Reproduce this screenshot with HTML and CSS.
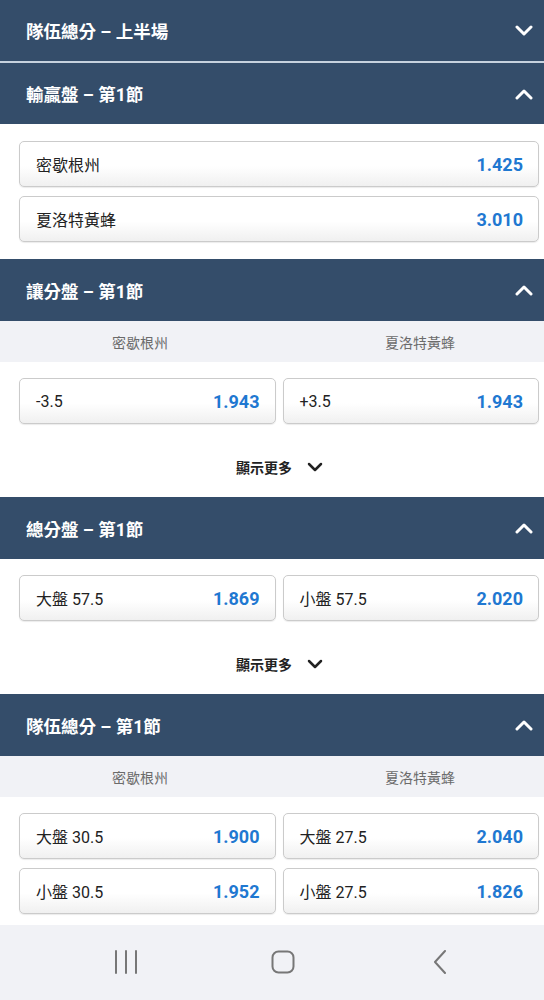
FILE: index.html
```html
<!DOCTYPE html>
<html lang="zh-Hant">
<head>
    <meta charset="UTF-8">
    <meta name="viewport" content="width=device-width, initial-scale=1.0">
    <title>投注市場</title>
    <link rel="stylesheet" href="styles.css">
</head>
<body>
    <div class="markets">
        <div class="market-head first">
            <span>隊伍總分 – 上半場</span>
            <svg class="chev" width="20" height="12" viewBox="0 0 20 12"><path d="M3 2 L10 9 L17 2" /></svg>
        </div>

        <div class="market-head">
            <span>輸贏盤 – 第1節</span>
            <svg class="chev" width="20" height="12" viewBox="0 0 20 12"><path d="M3 10 L10 3 L17 10" /></svg>
        </div>
        <div class="odds-list">
            <div class="odd-btn"><span class="label">密歇根州</span><span class="price">1.425</span></div>
            <div class="odd-btn"><span class="label">夏洛特黃蜂</span><span class="price">3.010</span></div>
        </div>

        <div class="market-head">
            <span>讓分盤 – 第1節</span>
            <svg class="chev" width="20" height="12" viewBox="0 0 20 12"><path d="M3 10 L10 3 L17 10" /></svg>
        </div>
        <div class="teams">
            <span>密歇根州</span>
            <span class="right">夏洛特黃蜂</span>
        </div>
        <div class="odds-grid">
            <div class="odd-btn"><span class="label">-3.5</span><span class="price">1.943</span></div>
            <div class="odd-btn"><span class="label">+3.5</span><span class="price">1.943</span></div>
        </div>
        <div class="show-more">
            <span>顯示更多</span>
            <svg width="18" height="12" viewBox="0 0 18 12"><path d="M3 3 L9 9 L15 3" /></svg>
        </div>

        <div class="market-head">
            <span>總分盤 – 第1節</span>
            <svg class="chev" width="20" height="12" viewBox="0 0 20 12"><path d="M3 10 L10 3 L17 10" /></svg>
        </div>
        <div class="odds-grid">
            <div class="odd-btn"><span class="label">大盤 57.5</span><span class="price">1.869</span></div>
            <div class="odd-btn"><span class="label">小盤 57.5</span><span class="price">2.020</span></div>
        </div>
        <div class="show-more">
            <span>顯示更多</span>
            <svg width="18" height="12" viewBox="0 0 18 12"><path d="M3 3 L9 9 L15 3" /></svg>
        </div>

        <div class="market-head">
            <span>隊伍總分 – 第1節</span>
            <svg class="chev" width="20" height="12" viewBox="0 0 20 12"><path d="M3 10 L10 3 L17 10" /></svg>
        </div>
        <div class="teams">
            <span>密歇根州</span>
            <span class="right">夏洛特黃蜂</span>
        </div>
        <div class="odds-grid last">
            <div class="odd-btn"><span class="label">大盤 30.5</span><span class="price">1.900</span></div>
            <div class="odd-btn"><span class="label">大盤 27.5</span><span class="price">2.040</span></div>
            <div class="odd-btn"><span class="label">小盤 30.5</span><span class="price">1.952</span></div>
            <div class="odd-btn"><span class="label">小盤 27.5</span><span class="price">1.826</span></div>
        </div>
    </div>

    <div class="nav-bar">
        <span class="nav-item"><svg width="24" height="24" viewBox="0 0 24 24"><path d="M2 1 V23 M12 1 V23 M22 1 V23" /></svg></span>
        <span class="nav-item"><svg width="24" height="24" viewBox="0 0 24 24"><rect x="1.5" y="1.5" width="21" height="21" rx="6" /></svg></span>
        <span class="nav-item"><svg width="16" height="24" viewBox="0 0 16 24"><path d="M13 1 L3 12 L13 23" /></svg></span>
    </div>
</body>
</html>
```

FILE: styles.css
```css
*{
    box-sizing: border-box;
    padding: 0;
    margin: 0;
}

body{
    width: 544px;
    background-color: #fff;
    font-family: Roboto, "Noto Sans CJK TC", sans-serif;
    color: #222;
}

.market-head{
    height: 62px;
    background-color: #344d6a;
    color: #fff;
    font-size: 17.5px;
    font-weight: bold;
    display: flex;
    align-items: center;
    justify-content: space-between;
    padding: 0 10px 0 26px;
}
.market-head.first{
    height: 63px;
    border-bottom: 2px solid #c6d2de;
}
.market-head + .market-head{
    height: 61px;
}
.market-head .chev path{
    fill: none;
    stroke: #fff;
    stroke-width: 3;
    stroke-linecap: round;
    stroke-linejoin: round;
}

.odds-list{
    display: flex;
    flex-direction: column;
    gap: 9px;
    padding: 17px 5px 17px 19px;
}

.odds-grid{
    display: grid;
    grid-template-columns: 1fr 1fr;
    gap: 9px 7px;
    padding: 16px 5px 0 19px;
}
.odds-grid.last{
    padding-bottom: 11px;
}

.odd-btn{
    height: 46px;
    border: 1px solid #cbcbcb;
    border-radius: 5px;
    background: linear-gradient(#fff 55%, #f0f0f0);
    box-shadow: 0 1px 1px rgba(0, 0, 0, 0.08);
    display: flex;
    align-items: center;
    justify-content: space-between;
    padding: 0 15px 0 16px;
}
.odd-btn .label{
    font-size: 16px;
    color: #222;
}
.odd-btn .price{
    font-size: 18px;
    font-weight: bold;
    color: #1f78d1;
}

.teams{
    height: 41px;
    background-color: #f1f2f6;
    display: grid;
    grid-template-columns: 280px 1fr;
    align-items: center;
    font-size: 14px;
    color: #6b6b6b;
}
.teams span{
    text-align: center;
}
.teams .right{
    padding-left: 16px;
}

.show-more{
    height: 73px;
    display: flex;
    justify-content: center;
    align-items: center;
    gap: 14px;
    padding: 12px 0 0 16px;
    font-size: 14px;
    font-weight: bold;
    color: #222;
}
.show-more svg path{
    fill: none;
    stroke: #222;
    stroke-width: 2.5;
    stroke-linecap: round;
    stroke-linejoin: round;
}

.nav-bar{
    height: 75px;
    background-color: #f1f2f6;
    display: flex;
    justify-content: center;
    align-items: center;
    padding: 0 0 2px 22px;
}
.nav-item{
    width: 157px;
    display: flex;
    justify-content: center;
}
.nav-bar svg path,
.nav-bar svg rect{
    fill: none;
    stroke: #777;
    stroke-width: 2;
    stroke-linecap: round;
    stroke-linejoin: round;
}
```
